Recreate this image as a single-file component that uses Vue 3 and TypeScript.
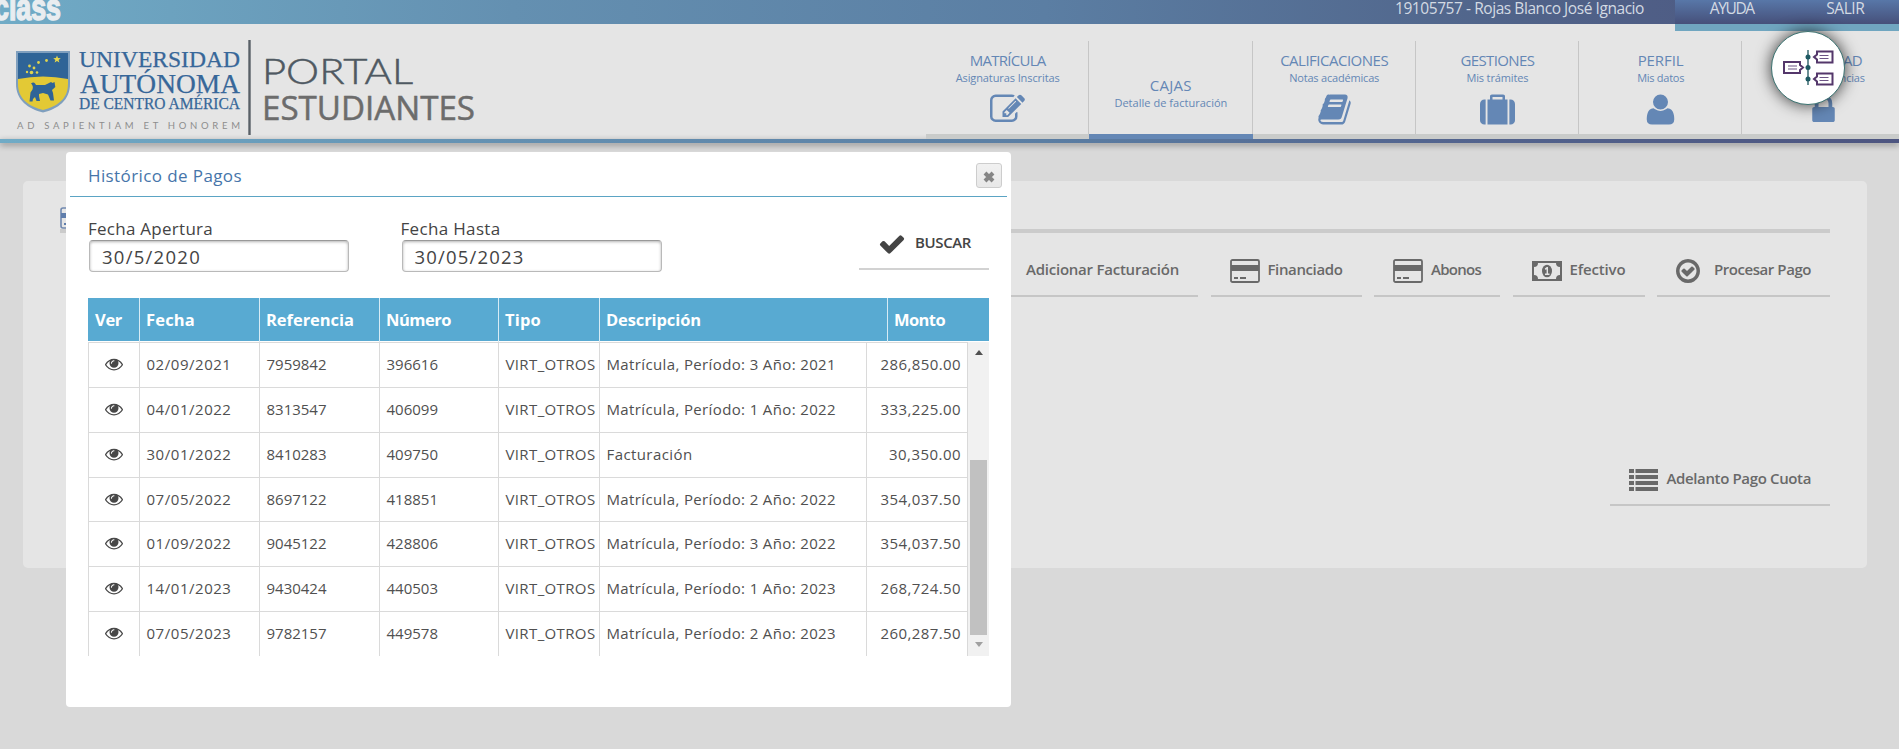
<script setup lang="ts">
import type { Directive } from 'vue'

// Spreads or tightens a label so that its advance width is the given number of pixels.
const vWide: Directive<HTMLElement, number> = {
  mounted(el, { value }) {
    const count = (el.textContent ?? '').trim().length
    const natural = el.getBoundingClientRect().width
    if (count > 0) el.style.letterSpacing = `${((value - natural) / count).toFixed(3)}px`
  },
}

interface Tab {
  name: string
  nameWidth: number
  detail: string
  detailWidth: number
  icon: string
  active?: boolean
}

const tabs: Tab[] = [
  {
    name: 'MATRÍCULA', nameWidth: 76, detail: 'Asignaturas Inscritas', detailWidth: 104,
    icon: 'M888 1184l116-116-152-152-116 116v56h96v96h56zm440-720q-16-16-33 1l-350 350q-17 17-1 33t33-1l350-350q17-17 1-33zm80 594v190q0 119-84.5 203.5t-203.5 84.5h-832q-119 0-203.5-84.5t-84.5-203.5v-832q0-119 84.5-203.5t203.5-84.5h832q63 0 117 25 15 7 18 23 3 17-9 29l-49 49q-14 14-32 8-23-6-45-6h-832q-66 0-113 47t-47 113v832q0 66 47 113t113 47h832q66 0 113-47t47-113v-126q0-13 9-22l64-64q15-15 35-7t20 29zm-96-738l288 288-672 672h-288v-288zm444 132l-92 92-288-288 92-92q28-28 68-28t68 28l152 152q28 28 28 68t-28 68z',
  },
  { name: 'CAJAS', nameWidth: 42, detail: 'Detalle de facturación', detailWidth: 113, icon: '', active: true },
  {
    name: 'CALIFICACIONES', nameWidth: 108, detail: 'Notas académicas', detailWidth: 90,
    icon: 'M1703 478q40 57 18 129l-275 906q-19 64-76.5 107.5t-122.5 43.5h-923q-77 0-148.5-53.5t-99.5-131.5q-24-67-2-127 0-4 3-27t4-37q1-8-3-21.5t-3-19.5q2-11 8-21t16.5-23.5 16.5-23.5q23-38 45-91.5t30-91.5q3-10 .5-30t-.5-28q3-11 17-28t17-23q21-36 42-92t25-90q1-9-2.5-32t.5-28q4-13 22-30.5t22-22.5q19-26 42.5-84.5t27.5-96.5q1-8-3-25.5t-2-26.5q2-8 9-18t18-23 17-21q8-12 16.5-30.5t15-35 16-36 19.5-32 26.5-23.5 36-11.5 47.5 5.5l-1 3q38-9 51-9h761q74 0 114 56t18 130l-274 906q-36 119-71.5 153.5t-128.5 34.5h-869q-27 0-38 15-11 16-1 43 24 70 144 70h923q29 0 56-15.5t35-41.5l300-987q7-22 5-57 38 15 59 43zm-1064 2q-4 13 2 22.5t20 9.5h608q13 0 25.5-9.5t16.5-22.5l21-64q4-13-2-22.5t-20-9.5h-608q-13 0-25.5 9.5t-16.5 22.5zm-83 256q-4 13 2 22.5t20 9.5h608q13 0 25.5-9.5t16.5-22.5l21-64q4-13-2-22.5t-20-9.5h-608q-13 0-25.5 9.5t-16.5 22.5z',
  },
  {
    name: 'GESTIONES', nameWidth: 74, detail: 'Mis trámites', detailWidth: 62,
    icon: 'M640 384h512v-128h-512v128zM288 384v1280h-64q-92 0-158-66t-66-158v-832q0-92 66-158t158-66h64zM1408 384v1280h-1024v-1280h128v-160q0-40 28-68t68-28h576q40 0 68 28t28 68v160h128zM1792 608v832q0 92-66 158t-158 66h-64v-1280h64q92 0 158 66t66 158z',
  },
  {
    name: 'PERFIL', nameWidth: 46, detail: 'Mis datos', detailWidth: 47,
    icon: 'M1600 1405q0 120-73 189.500t-194 69.500h-874q-121 0-194-69.500t-73-189.500q0-53 3.500-103.500t14-109 26.500-108.500 43-97.500 62-81 85.500-53.500 111.500-20q9 0 42 21.500t74.500 48 108 48 133.500 21.500 133.500-21.500 108-48 74.500-48 42-21.500q61 0 111.500 20t85.500 53.500 62 81 43 97.500 26.500 108.500 14 109 3.500 103.500zM1280 512q0 159-112.500 271.500t-271.500 112.500-271.500-112.500-112.500-271.500 112.500-271.500 271.500-112.500 271.500 112.500 112.500 271.500z',
  },
  {
    name: 'SEGURIDAD', nameWidth: 76, detail: 'Mis preferencias', detailWidth: 82,
    icon: 'M640 768h512v-192q0-106-75-181t-181-75-181 75-75 181v192zm832 96v576q0 40-28 68t-68 28h-960q-40 0-68-28t-28-68v-576q0-40 28-68t68-28h32v-192q0-184 132-316t316-132 316 132 132 316v192h32q40 0 68 28t28 68z',
  },
]

interface Action {
  label: string
  labelWidth: number
  kind: 'plus' | 'card' | 'cash' | 'ok'
}

const actions: Action[] = [
  { label: 'Adicionar Facturación', labelWidth: 153, kind: 'plus' },
  { label: 'Financiado', labelWidth: 75, kind: 'card' },
  { label: 'Abonos', labelWidth: 50, kind: 'card' },
  { label: 'Efectivo', labelWidth: 56, kind: 'cash' },
  { label: 'Procesar Pago', labelWidth: 97, kind: 'ok' },
]

const columns = [
  { title: 'Ver', width: 27 },
  { title: 'Fecha', width: 49 },
  { title: 'Referencia', width: 88 },
  { title: 'Número', width: 65 },
  { title: 'Tipo', width: 36 },
  { title: 'Descripción', width: 95 },
  { title: 'Monto', width: 51 },
]

interface Payment {
  date: string
  reference: string
  number: string
  description: string
  amount: string
}

const payments: Payment[] = [
  { date: '02/09/2021', reference: '7959842', number: '396616', description: 'Matrícula, Período: 3 Año: 2021', amount: '286,850.00' },
  { date: '04/01/2022', reference: '8313547', number: '406099', description: 'Matrícula, Período: 1 Año: 2022', amount: '333,225.00' },
  { date: '30/01/2022', reference: '8410283', number: '409750', description: 'Facturación', amount: '30,350.00' },
  { date: '07/05/2022', reference: '8697122', number: '418851', description: 'Matrícula, Período: 2 Año: 2022', amount: '354,037.50' },
  { date: '01/09/2022', reference: '9045122', number: '428806', description: 'Matrícula, Período: 3 Año: 2022', amount: '354,037.50' },
  { date: '14/01/2023', reference: '9430424', number: '440503', description: 'Matrícula, Período: 1 Año: 2023', amount: '268,724.50' },
  { date: '07/05/2023', reference: '9782157', number: '449578', description: 'Matrícula, Período: 2 Año: 2023', amount: '260,287.50' },
]

const eye = 'M1664 960q-152-236-381-353 61 104 61 225 0 185-131.5 316.5t-316.5 131.5-316.5-131.5-131.5-316.5q0-121 61-225-229 117-381 353 133 205 333.5 326.5t434.5 121.5 434.5-121.5 333.5-326.5zm-720-384q0-20-14-34t-34-14q-125 0-214.5 89.5t-89.5 214.5q0 20 14 34t34 14 34-14 14-34q0-86 61-147t147-61q20 0 34-14t14-34zm848 384q0 34-20 69-140 230-376.5 368.5t-499.5 138.5-499.5-139-376.5-368q-20-35-20-69t20-69q140-229 376.5-368t499.5-139 499.5 139 376.5 368q20 35 20 69z'
</script>

<template>
  <div class="page">
    <div class="topbar">
      <svg class="brand" width="70" height="24" viewBox="0 0 70 24">
        <text x="-6" y="20" textLength="67" lengthAdjust="spacingAndGlyphs">class</text>
      </svg>
      <div class="account"><span v-wide="249">19105757 - Rojas Blanco José Ignacio</span></div>
      <div class="session">
        <a><span v-wide="44">AYUDA</span></a>
        <a><span v-wide="38">SALIR</span></a>
      </div>
    </div>

    <header class="header">
      <svg class="logo" width="490" height="115" viewBox="0 24 490 115">
        <path d="M16 51H70V84C70 100 58 109 43 112.500C28 109 16 100 16 84Z" fill="#7f9fbe" />
        <path d="M18 53H68V80H18Z" fill="#2f6497" />
        <path d="M18 79Q43 74 68 79V84C68 99 57 106.500 43 110C29 106.500 18 99 18 84Z" fill="#e3c935" />
        <path d="M32 83c2-1 3 0 4 2h9l6-3 1.500 1 2-1 .8 5-3.300 3 1 3 1 7.500h-3.500l-2.500-6-5-1.500-4 1v2l1 5h-3.500l-1.500-4-2 2-.5 2.500h-3l1-9 2-3c1-3 0-4-1.500-6.500z" fill="#2f6497" />
        <path d="M57 55.500l1 2.600 2.800.1-2.200 1.700.8 2.700-2.400-1.500-2.400 1.500.8-2.700-2.200-1.700 2.800-.1z" fill="#e8d84c" />
        <g fill="#dfd34e">
          <circle cx="46.500" cy="60.500" r="1.400" /><circle cx="38.500" cy="62.500" r="1.400" />
          <circle cx="29.500" cy="66" r="1.400" /><circle cx="34" cy="68" r="1.400" />
          <circle cx="27" cy="72" r="1.200" /><circle cx="31.500" cy="72.500" r="1.800" />
          <circle cx="37" cy="72.500" r="1.300" />
        </g>
        <g class="serif">
          <text x="79" y="67" font-size="23.500" textLength="161" lengthAdjust="spacingAndGlyphs">UNIVERSIDAD</text>
          <text x="80" y="92.500" font-size="26.500" textLength="160" lengthAdjust="spacingAndGlyphs">AUTÓNOMA</text>
          <text x="79" y="109" font-size="16" textLength="161" lengthAdjust="spacingAndGlyphs">DE CENTRO AMÉRICA</text>
        </g>
        <text class="motto" x="17" y="128.500" textLength="223">AD SAPIENTIAM ET HONOREM</text>
        <path d="M249.500 40V135" stroke="#596067" stroke-width="2.400" />
        <text class="portal" x="262" y="83.500" textLength="151" lengthAdjust="spacingAndGlyphs">PORTAL</text>
        <text class="students" x="262" y="120" textLength="213" lengthAdjust="spacingAndGlyphs">ESTUDIANTES</text>
      </svg>
      <nav class="tabs">
        <a v-for="tab in tabs" :key="tab.name" class="tab" :class="{ active: tab.active }">
          <span class="tab-name"><span v-wide="tab.nameWidth">{{ tab.name }}</span></span>
          <span class="tab-detail"><span v-wide="tab.detailWidth">{{ tab.detail }}</span></span>
          <svg v-if="tab.icon" class="tab-icon" viewBox="0 0 1792 1792"><path :d="tab.icon" /></svg>
        </a>
      </nav>
    </header>
    <div class="rule"></div>

    <main class="panel">
      <div class="panel-head">
        <svg width="30" height="24" viewBox="0 0 30 24">
          <rect x="1" y="1" width="27" height="20" rx="2" fill="none" stroke="#7189b0" stroke-width="1.600" />
          <path d="M1 6h28v5H1zM4 16h4v2H4z" fill="#5f7dab" />
        </svg>
      </div>
      <div class="actions">
        <a v-for="action in actions" :key="action.label" class="action" :class="action.kind">
          <svg v-if="action.kind === 'plus'" width="26" height="26" viewBox="0 0 26 26"><path d="M10 2h6v8h8v6h-8v8h-6v-8H2v-6h8z" fill="currentColor" /></svg>
          <svg v-else-if="action.kind === 'card'" width="30" height="24" viewBox="0 0 30 24">
            <rect x="1" y="1" width="28" height="22" rx="1.500" fill="none" stroke="currentColor" stroke-width="1.800" />
            <path d="M1 6h28v6H1zM4 18h4v2H4zM10 18h6v2h-6z" fill="currentColor" />
          </svg>
          <svg v-else-if="action.kind === 'cash'" width="30" height="20" viewBox="0 0 30 20">
            <path fill="currentColor" fill-rule="evenodd" d="M0 0h30v20H0zM6 2a4 4 0 0 1-4 4v8a4 4 0 0 1 4 4h18a4 4 0 0 1 4-4V6a4 4 0 0 1-4-4z" />
            <ellipse cx="15" cy="10" rx="5" ry="6.300" fill="currentColor" />
            <path d="M12.800 7.500l2-1.500h1.200v6.500h1.500v1.500h-4.500v-1.500h1.600V8.300l-1 .7z" class="cash-mark" />
          </svg>
          <svg v-else width="28" height="28" viewBox="0 0 1792 1792"><path fill="currentColor" d="M1299 813l-422 422q-19 19-45 19t-45-19l-294-294q-19-19-19-45t19-45l102-102q19-19 45-19t45 19l147 147 275-275q19-19 45-19t45 19l102 102q19 19 19 45t-19 45zm141 83q0-148-73-273t-198-198-273-73-273 73-198 198-73 273 73 273 198 198 273 73 273-73 198-198 73-273zm224 0q0 209-103 385.500t-279.500 279.500-385.500 103-385.500-103-279.500-279.500-103-385.500 103-385.500 279.500-279.500 385.500-103 385.500 103 279.500 279.500 103 385.500z" /></svg>
          <b v-wide="action.labelWidth">{{ action.label }}</b>
        </a>
      </div>
      <div class="advance">
        <a class="action">
          <svg width="29" height="22" viewBox="0 0 29 22"><path fill="currentColor" d="M0 0h5v4H0zM6.500 0H29v4H6.500zM0 6h5v4H0zM6.500 6H29v4H6.500zM0 12h5v4H0zM6.500 12H29v4H6.500zM0 18h5v4H0zM6.500 18H29v4H6.500z" /></svg>
          <b v-wide="144.500">Adelanto Pago Cuota</b>
        </a>
      </div>
    </main>

    <section class="dialog">
      <div class="dialog-head">
        <span v-wide="154">Histórico de Pagos</span>
        <button class="close">
          <svg width="12" height="12" viewBox="0 0 12 12"><path d="M2 2l8 8M10 2L2 10" stroke="#858585" stroke-width="4" /></svg>
        </button>
      </div>
      <div class="filters">
        <label class="field">
          <span class="field-name"><span v-wide="125">Fecha Apertura</span></span>
          <span class="field-box"><span v-wide="99">30/5/2020</span></span>
        </label>
        <label class="field">
          <span class="field-name"><span v-wide="100">Fecha Hasta</span></span>
          <span class="field-box"><span v-wide="110">30/05/2023</span></span>
        </label>
        <a class="search">
          <svg width="28" height="28" viewBox="0 0 1792 1792"><path fill="currentColor" d="M1671 566q0 40-28 68l-724 724-136 136q-28 28-68 28t-68-28l-136-136-362-362q-28-28-28-68t28-68l136-136q28-28 68-28t68 28l294 295 656-657q28-28 68-28t68 28l136 136q28 28 28 68z" /></svg>
          <b v-wide="56">BUSCAR</b>
        </a>
      </div>
      <div class="table">
        <div class="table-head">
          <div v-for="column in columns" :key="column.title"><b v-wide="column.width">{{ column.title }}</b></div>
        </div>
        <div class="table-body">
          <div class="rows">
            <div v-for="payment in payments" :key="payment.reference" class="row">
              <div class="view"><svg width="18" height="18" viewBox="0 0 1792 1792"><path :d="eye" /></svg></div>
              <div><span v-wide="85">{{ payment.date }}</span></div>
              <div><span v-wide="60">{{ payment.reference }}</span></div>
              <div><span v-wide="51.500">{{ payment.number }}</span></div>
              <div><span v-wide="90">VIRT_OTROS</span></div>
              <div><span v-wide="payment.description.length > 20 ? 229.500 : 86">{{ payment.description }}</span></div>
              <div class="amount"><span v-wide="payment.amount.length > 9 ? 80.500 : 72">{{ payment.amount }}</span></div>
            </div>
          </div>
          <div class="scrollbar">
            <i class="arrow up"></i>
            <div class="thumb"></div>
            <i class="arrow down"></i>
          </div>
        </div>
      </div>
    </section>

    <div class="bubble">
      <svg width="52" height="38" viewBox="0 0 52 38" fill="none">
        <path d="M26 1v35" stroke="#2d6067" stroke-width="1.400" />
        <g fill="#1f5a63"><circle cx="26" cy="8" r="2.500" /><circle cx="26" cy="18.500" r="2.500" /><circle cx="26" cy="30" r="2.500" /></g>
        <g stroke="#54376b" stroke-width="2">
          <path d="M2 13h16v3l3 2.500-3 2.500v3H2z" /><path d="M50.500 2.500H35v3l-3 2.500 3 2.500v3h15.500z" /><path d="M50.500 24.500H35v3l-3 2.500 3 2.500v3h15.500z" />
        </g>
        <path d="M6 17h9M6 20h9M37.500 6.500h9M37.500 9.500h9M37.500 28.500h9M37.500 31.500h9" stroke="#6d5485" stroke-width="1.200" />
      </svg>
    </div>
  </div>
</template>

<style>
body {
  margin: 0;
  background: #d9d9d9;
}
</style>

<style scoped>
.page {
  position: relative;
  height: 749px;
  overflow: hidden;
  background: #d9d9d9;
  font: 15px/20px "Open Sans", "Noto Sans", sans-serif;
  color: #505050;
}
.page * { box-sizing: border-box; }
.page span, .page b { white-space: nowrap; }
.page svg { display: block; flex: none; }

.topbar {
  display: flex;
  height: 24px;
  background: linear-gradient(90deg, #70abc6, #6490b1 27%, #5b7ea3 55%, #506389 80%, #4d5580);
  color: #d3dae3;
}
.brand text { font: 900 37px "Liberation Sans Narrow", "Liberation Sans", sans-serif; fill: #e9edf0; stroke: #e9edf0; stroke-width: 1.6; }
.account { margin-left: auto; width: 280px; margin-top: -2px; font-size: 15.5px; }
.session {
  display: flex;
  width: 224px;
  height: 31px;
  border-bottom: 7px solid #70a6c0;
  background: linear-gradient(#5877a8, #46507a);
  background-clip: padding-box;
  font-size: 15.5px;
}
.session a { width: 112px; margin-top: -2px; padding-left: 3px; text-align: center; }
.session a:last-child { margin-left: 3px; }

.header { display: flex; justify-content: space-between; height: 115px; background: #e5e5e5; }
.serif { font-family: "Liberation Serif", serif; fill: #376799; stroke: #376799; stroke-width: .25; }
.motto { font: 9.5px Lato, sans-serif; fill: #8d8d8d; }
.portal { font: 300 36px Lato, sans-serif; fill: #4f5962; stroke: #4f5962; stroke-width: .5; }
.students { font: 400 33.5px "Open Sans", sans-serif; fill: #6c6c6c; stroke: #6c6c6c; stroke-width: .5; }

.tabs { display: flex; width: 973px; overflow: hidden; }
.tab {
  display: flex;
  flex: none;
  flex-direction: column;
  align-items: center;
  width: 163.25px;
  padding-top: 26px;
  border-bottom: 5px solid #c9cbca;
  background: linear-gradient(#c6c6c6, #c6c6c6) 100% 17px / 1px 100% no-repeat;
  color: #6487b5;
}
.tab:last-child { background: none; }
.tab.active { padding-top: 51px; border-bottom-color: #6487b5; }
.tab-name { height: 21px; }
.tab-detail { height: 21px; font-size: 11px; line-height: 14px; }
.tab-icon { width: 35px; height: 35px; fill: currentColor; }

.rule {
  height: 4px;
  background: linear-gradient(90deg, #70abc6, #6490b1 27%, #5b7ea3 55%, #53658f 75%, #4d5580);
  box-shadow: 0 2px 6px rgba(0, 0, 0, .4);
}

.panel {
  width: 1844px;
  height: 387px;
  margin: 38px 0 0 23px;
  padding: 23px 37px 0;
  border-radius: 5px;
  background: #e5e5e5;
  color: #696969;
}
.panel-head { height: 29px; padding-top: 3px; border-bottom: 4px solid #cbcbcb; }
.actions { display: flex; justify-content: flex-end; gap: 12.5px; margin-top: 18px; }
.action {
  display: flex;
  align-items: center;
  gap: 8px;
  height: 46px;
  padding: 0 19px 4px;
  border-bottom: 2px solid #c6c6c6;
}
.action b { font-weight: 600; margin-top: -4px; }
.action.plus { gap: 20px; }
.action.ok { padding-left: 17px; gap: 12px; }
.cash-mark { fill: #e5e5e5; }
.advance { display: flex; justify-content: flex-end; margin-top: 163px; }

.dialog {
  position: absolute;
  left: 66px;
  top: 152px;
  width: 945px;
  height: 555px;
  padding: 0 4px;
  border-radius: 4px;
  background: #fff;
}
.dialog-head {
  display: flex;
  justify-content: space-between;
  height: 45px;
  padding: 11px 5px 0 18px;
  border-bottom: 1px solid #5ba4c4;
  color: #4675aa;
  font-size: 17px;
  line-height: 26px;
}
.close {
  display: flex;
  align-items: center;
  justify-content: center;
  width: 26px;
  height: 25px;
  padding: 2px 0 0;
  border: 1px solid #cdcdcd;
  border-radius: 3px;
  background: linear-gradient(#f1f1f1, #e8e8e8);
}
.filters { display: flex; height: 101px; padding: 22px 18px 0 19px; color: #444; }
.field { display: flex; flex-direction: column; width: 260px; margin-right: 52.5px; font-size: 17px; }
.field-name { height: 21px; line-height: 20px; margin-left: -1px; }
.field-box {
  height: 32px;
  padding-left: 12px;
  border: 1px solid #b9b9b9;
  border-top-color: #999;
  border-radius: 4px;
  box-shadow: inset 0 1px 3px rgba(0, 0, 0, .3);
  font-size: 18.5px;
  line-height: 31px;
}
.search {
  display: flex;
  align-items: center;
  gap: 9px;
  width: 130px;
  height: 51px;
  margin-left: auto;
  padding-left: 19px;
  border-bottom: 2px solid #d2d2d2;
}
.search svg { margin-top: 1px; }
.search b { margin-top: -3px; font-weight: 600; }

.table { width: 901px; margin-left: 18px; }
.table-head, .row {
  display: grid;
  grid-template-columns: 51px 120px 120px 119px 101px 288px 102px;
}
.table-head { height: 43px; background: #58aad2; color: #fff; font-size: 16.5px; line-height: 44px; }
.table-head div { padding-left: 6px; border-left: 1px solid #d6ebf5; }
.table-head div:first-child { border-left-color: transparent; }
.table-head b { font-weight: 700; }
.table-body { display: flex; height: 315px; padding-top: 1px; overflow: hidden; }
.rows { width: 880px; border-right: 1px solid #d9d9d9; }
.row {
  grid-template-columns: 51px 120px 120px 119px 101px 267px 101px;
  height: 44.85px;
  border-top: 1px solid #dadada;
  line-height: 42px;
}
.row div { padding-left: 6.5px; border-left: 1px solid #dadada; }
.row .view { padding: 12px 0 0 16px; fill: #484848; }
.row .amount { padding: 0 6px 0 0; text-align: right; }
.scrollbar {
  display: flex;
  flex-direction: column;
  align-items: center;
  width: 21px;
  height: 314px;
  background: #f1f1f1;
}
.thumb { width: 17px; height: 175px; margin-top: 105px; background: #c1c1c1; }
.arrow { width: 0; height: 0; border: 4.5px solid transparent; }
.arrow.up { margin-top: 4px; border-bottom: 5px solid #505050; }
.arrow.down { margin-top: 7px; border-top: 5px solid #a0a0a0; }

.bubble {
  position: absolute;
  left: 1771px;
  top: 31px;
  display: flex;
  align-items: center;
  justify-content: center;
  width: 74px;
  height: 74px;
  border: 1px solid #3b7371;
  border-radius: 50%;
  background: #fff;
  box-shadow: 0 0 16px rgba(0, 0, 0, .75);
}
</style>
